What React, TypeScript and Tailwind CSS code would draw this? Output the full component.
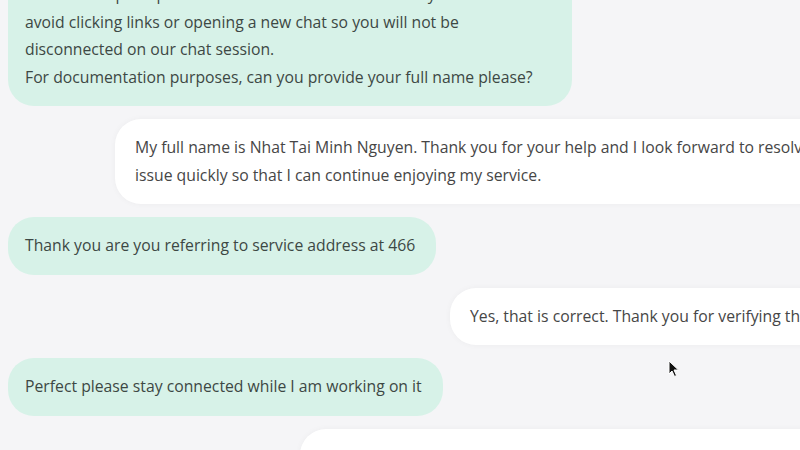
const messages = [
  {
    from: 'agent',
    width: 'w-[564px]',
    lines: [
      'Allow me to pull up the account first and check this for you. Please',
      'avoid clicking links or opening a new chat so you will not be',
      'disconnected on our chat session.',
      'For documentation purposes, can you provide your full name please?',
    ],
  },
  {
    from: 'user',
    offset: 'ml-[115px]',
    lines: [
      'My full name is Nhat Tai Minh Nguyen. Thank you for your help and I look forward to resolving this',
      'issue quickly so that I can continue enjoying my service.',
    ],
  },
  { from: 'agent', lines: ['Thank you are you referring to service address at 466'] },
  {
    from: 'user',
    offset: 'ml-[450px]',
    lines: ['Yes, that is correct. Thank you for verifying this information.'],
  },
  { from: 'agent', lines: ['Perfect please stay connected while I am working on it'] },
  {
    from: 'user',
    offset: 'ml-[300px]',
    lines: ['Would it be possible to tell me how long this will take to resolve please?'],
  },
]

function Bubble({
  from,
  lines,
  offset,
  width,
}: {
  from: string
  lines: string[]
  offset?: string
  width?: string
}) {
  if (from === 'agent') {
    return (
      <div
        className={`${width ?? ''} self-start ml-2 rounded-[26px] bg-[#d7f2e8] py-[15px] pl-[17px] pr-[21px] text-[#3d4844]`}
      >
        {lines.map((l, i) => (
          <div key={i} className="whitespace-nowrap">
            {l}
          </div>
        ))}
      </div>
    )
  }
  return (
    <div
      className={`${offset} w-[900px] shrink-0 rounded-[26px] bg-white px-5 py-[15px] text-[#464646] shadow-[0_0_6px_rgba(0,0,0,0.04)]`}
    >
      {lines.map((l, i) => (
        <div key={i} className="whitespace-nowrap">
          {l}
        </div>
      ))}
    </div>
  )
}

export default function App() {
  return (
    <div
      className="relative h-[450px] w-[800px] overflow-hidden bg-[#f5f5f7] text-[15.75px] leading-[27.5px]"
      style={{ fontFamily: '"Open Sans", sans-serif' }}
    >
      <div className="-mt-[34px] flex flex-col gap-[13px]">
        {messages.map((m, i) => (
          <Bubble key={i} from={m.from} lines={m.lines} offset={m.offset} width={m.width} />
        ))}
      </div>
      <svg className="absolute left-[668px] top-[360px]" width="12" height="18" viewBox="0 0 12 18">
        <path d="M1 1 L1 14 L4 11 L6.5 16.5 L8.5 15.5 L6 10 L10.5 10 Z" fill="#111" stroke="#fff" strokeWidth="1" />
      </svg>
    </div>
  )
}
